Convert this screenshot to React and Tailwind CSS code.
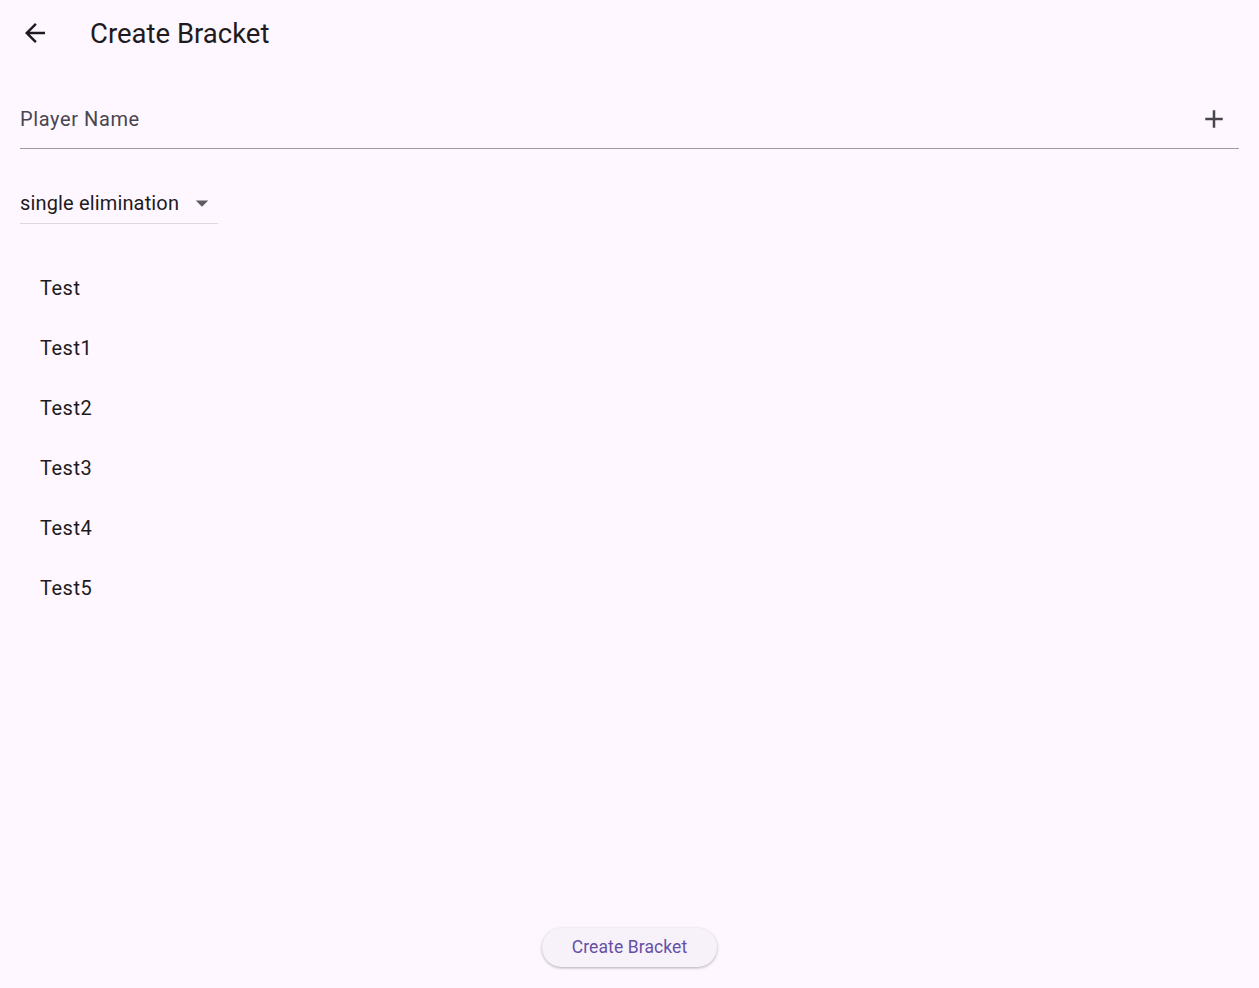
import React, { useState } from 'react';

const font = { fontFamily: 'Roboto, "Noto Sans", sans-serif' };

const players = ['Test', 'Test1', 'Test2', 'Test3', 'Test4', 'Test5'];

const BackArrow = () => (
  <svg width="30" height="30" viewBox="0 0 24 24" fill="#1d1b20">
    <path d="M20 11H7.83l5.59-5.59L12 4l-8 8 8 8 1.41-1.41L7.83 13H20v-2z" />
  </svg>
);

const PlusIcon = () => (
  <svg width="30" height="30" viewBox="0 0 24 24" fill="#49454f">
    <path d="M19 13h-6v6h-2v-6H5v-2h6V5h2v6h6v2z" />
  </svg>
);

const DropArrow = () => (
  <svg width="30" height="30" viewBox="0 0 24 24" fill="#5f5b62">
    <path d="M7 10l5 5 5-5z" />
  </svg>
);

export default function App() {
  const [name, setName] = useState('');

  return (
    <div className="w-[1259px] h-[988px] bg-[#fef7ff] flex flex-col overflow-hidden" style={font}>
      {/* App bar */}
      <div className="h-[66px] flex items-center shrink-0">
        <div className="w-[90px] flex items-center pl-[20px]">
          <BackArrow />
        </div>
        <h1 className="text-[27.5px] text-[#1d1b20] leading-none pt-[1px]">Create Bracket</h1>
      </div>

      <div className="flex flex-col px-[20px] flex-1">
        {/* Player name field */}
        <div className="h-[64px] mt-[19px] flex items-center border-b border-[#9e9aa1]">
          <input
            value={name}
            onChange={(e) => setName(e.target.value)}
            placeholder="Player Name"
            className="flex-1 bg-transparent outline-none text-[20px] text-[#1d1b20] placeholder:text-[#49454f] tracking-[0.6px] mt-[4px]"
          />
          <div className="w-[30px] mr-[10px] flex items-center justify-center mt-[4px]">
            <PlusIcon />
          </div>
        </div>

        {/* Format dropdown */}
        <div className="mt-[25px] w-[198px] h-[50px] flex items-center border-b border-[#dcd8dd] pt-[8px]">
          <span className="text-[20px] text-[#1d1b20] tracking-[0.15px] flex-1">single elimination</span>
          <div className="mr-[1px] flex items-center">
            <DropArrow />
          </div>
        </div>

        {/* Players */}
        <div className="flex flex-col mt-[34px]">
          {players.map((p) => (
            <div key={p} className="h-[60px] flex items-center pl-[20px]">
              <span className="text-[20px] text-[#1d1b20] tracking-[0.5px]">{p}</span>
            </div>
          ))}
        </div>

        <div className="flex-1" />

        <div className="flex justify-center pb-[21px]">
          <button className="w-[175px] h-[39px] rounded-full bg-[#f7f2fa] text-[#6750a4] text-[17.5px] tracking-[0.1px] shadow-[0_1px_3px_rgba(0,0,0,0.3)]">
            Create Bracket
          </button>
        </div>
      </div>
    </div>
  );
}
